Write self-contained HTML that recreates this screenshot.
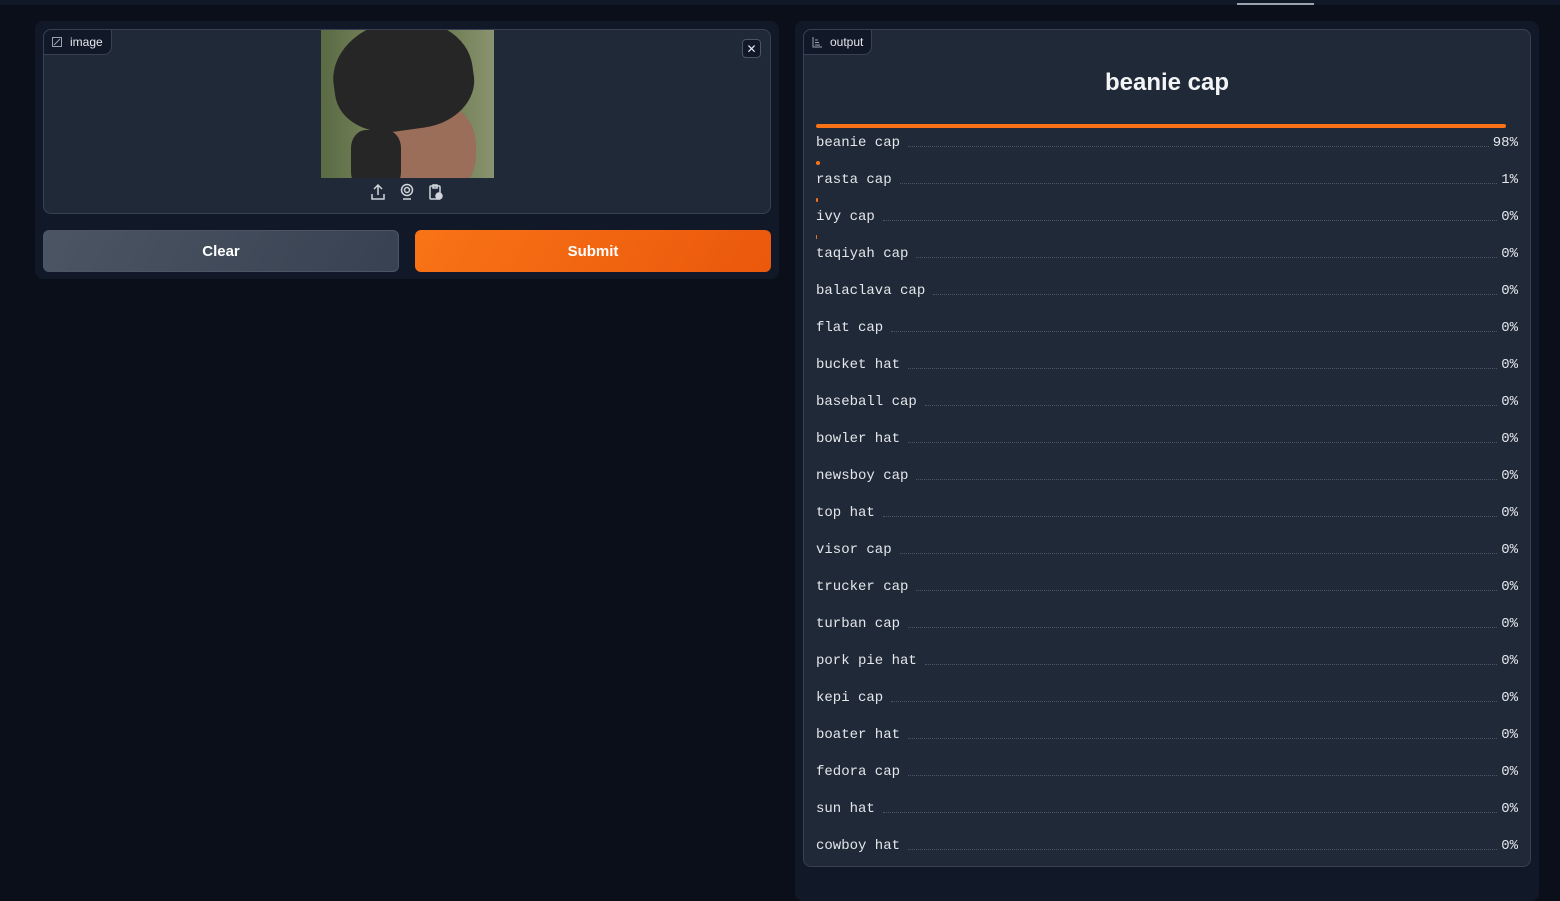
<!DOCTYPE html>
<html><head><meta charset="utf-8"><style>
*{box-sizing:border-box;margin:0;padding:0}
body{width:1560px;height:888px;background:#0b0f19;font-family:"Liberation Sans",sans-serif;color:#e5e7eb;position:relative;overflow:hidden}
.top{position:absolute;left:0;top:0;width:1560px;height:5px;background:#111827}
.tab{position:absolute;left:1237px;top:3px;width:77px;height:2px;background:#9ca3af}
.blk{position:absolute;background:#111827;border-radius:8px}
.pan{position:absolute;background:#1f2937;border:1px solid #374151;border-radius:8px}
.lbl{position:absolute;left:-1px;top:-1px;height:26px;padding:0 8px 0 8px;display:flex;align-items:center;gap:8px;font-size:12px;color:#e5e7eb;background:#111827;border:1px solid #374151;border-radius:8px 0 8px 0}
.btn{position:absolute;top:230px;height:42px;border-radius:6px;display:flex;align-items:center;justify-content:center;font-weight:bold;font-size:15px;color:#fff}
.row{position:absolute;left:816px;width:702px;height:20px;font-family:"Liberation Mono",monospace;font-size:14px;display:flex;align-items:center;color:#e5e7eb}
.row .d{flex:1;border-bottom:1px dotted #4b5563;margin:6px 4px 0 8px}
.bar{position:absolute;left:816px;height:4px;background:#f97316;border-radius:2px}
</style></head><body>
<div class="top"></div><div class="tab"></div>
<div class="blk" style="left:35px;top:21px;width:744px;height:258px"></div>
<div class="pan" style="left:43px;top:29px;width:728px;height:185px">
<div class="lbl"><svg width="10" height="10" viewBox="0 0 10 10"><rect x=".5" y=".5" width="9" height="9" fill="none" stroke="#9ca3af"/><path d="M2 8L8 2" stroke="#9ca3af"/></svg>image</div>
<div style="position:absolute;left:698px;top:9px;width:19px;height:19px;border:1px solid #4b5563;border-radius:4px;background:#111827;color:#e5e7eb;font-size:12px;display:flex;align-items:center;justify-content:center">✕</div>
</div>
<div style="position:absolute;left:321px;top:30px;width:173px;height:148px;overflow:hidden;background:linear-gradient(90deg,#5a6a44,#7d8a5e 40%,#6b7a50 70%,#8a9470)">
<div style="position:absolute;left:55px;top:70px;width:100px;height:100px;border-radius:45%;background:#9a6e58"></div>
<div style="position:absolute;left:12px;top:-10px;width:140px;height:110px;border-radius:50% 50% 40% 40%;background:#262626;transform:rotate(-8deg)"></div>
<div style="position:absolute;left:30px;top:100px;width:50px;height:60px;background:#262626;border-radius:30%"></div>
</div>
<svg style="position:absolute;left:370px;top:183px" width="80" height="18" viewBox="0 0 80 18" fill="none" stroke="#d1d5db" stroke-width="1.5"><path d="M8 2v10M4 6l4-4 4 4M2 11v5h12v-5"/><circle cx="37" cy="7" r="5.5"/><circle cx="37" cy="7" r="2.5"/><path d="M33 16h8"/><rect x="60" y="3" width="10" height="13" rx="1"/><path d="M63 2h4v3h-4z"/><circle cx="69" cy="13" r="3" fill="#d1d5db"/></svg>
<div class="btn" style="left:43px;width:356px;background:linear-gradient(120deg,#4b5563,#374151);border:1px solid #4b5563">Clear</div>
<div class="btn" style="left:415px;width:356px;background:linear-gradient(120deg,#f97316,#ea580c)">Submit</div>

<div class="blk" style="left:795px;top:21px;width:744px;height:880px"></div>
<div class="pan" style="left:803px;top:29px;width:728px;height:838px">
<div class="lbl"><svg width="10" height="11" viewBox="0 0 10 11"><path d="M1 0v10h9M3 3h3M3 5.5h4M3 8h5" stroke="#9ca3af" fill="none"/></svg>output</div>
</div>
<div style="position:absolute;left:803px;top:69px;width:728px;text-align:center;font-size:24px;font-weight:bold;color:#f3f4f6">beanie cap</div>
<div class="bar" style="top:124px;width:690px"></div>
<div class="bar" style="top:161px;width:4px;height:4px"></div>
<div class="bar" style="top:198px;width:2px;height:4px"></div>
<div class="bar" style="top:235px;width:1px;height:4px"></div>
<div class="row" style="top:133px">beanie cap<span class="d"></span>98%</div>
<div class="row" style="top:170px">rasta cap<span class="d"></span>1%</div>
<div class="row" style="top:207px">ivy cap<span class="d"></span>0%</div>
<div class="row" style="top:244px">taqiyah cap<span class="d"></span>0%</div>
<div class="row" style="top:281px">balaclava cap<span class="d"></span>0%</div>
<div class="row" style="top:318px">flat cap<span class="d"></span>0%</div>
<div class="row" style="top:355px">bucket hat<span class="d"></span>0%</div>
<div class="row" style="top:392px">baseball cap<span class="d"></span>0%</div>
<div class="row" style="top:429px">bowler hat<span class="d"></span>0%</div>
<div class="row" style="top:466px">newsboy cap<span class="d"></span>0%</div>
<div class="row" style="top:503px">top hat<span class="d"></span>0%</div>
<div class="row" style="top:540px">visor cap<span class="d"></span>0%</div>
<div class="row" style="top:577px">trucker cap<span class="d"></span>0%</div>
<div class="row" style="top:614px">turban cap<span class="d"></span>0%</div>
<div class="row" style="top:651px">pork pie hat<span class="d"></span>0%</div>
<div class="row" style="top:688px">kepi cap<span class="d"></span>0%</div>
<div class="row" style="top:725px">boater hat<span class="d"></span>0%</div>
<div class="row" style="top:762px">fedora cap<span class="d"></span>0%</div>
<div class="row" style="top:799px">sun hat<span class="d"></span>0%</div>
<div class="row" style="top:836px">cowboy hat<span class="d"></span>0%</div>
</body></html>
